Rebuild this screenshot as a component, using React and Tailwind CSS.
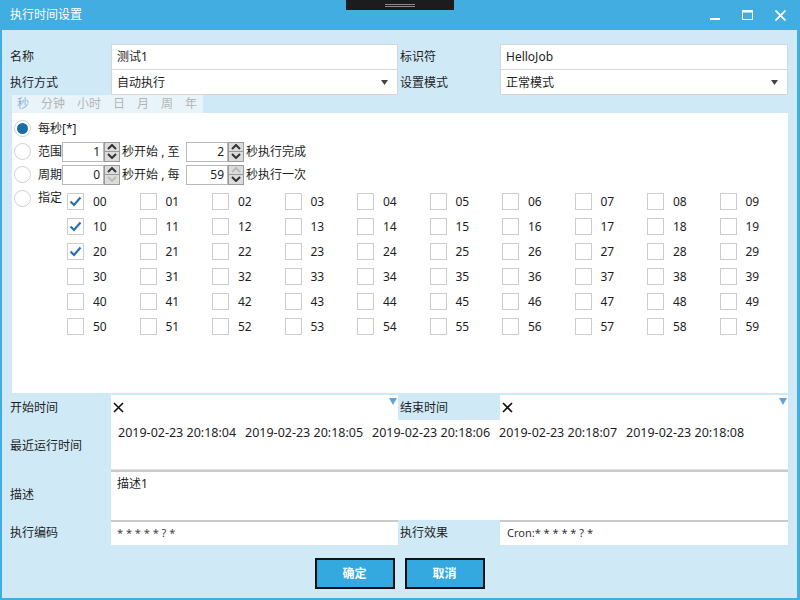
import React from "react";

const dates = [
  "2019-02-23 20:18:04",
  "2019-02-23 20:18:05",
  "2019-02-23 20:18:06",
  "2019-02-23 20:18:07",
  "2019-02-23 20:18:08",
];

const checked = ["00", "10", "20"];

const Caret = () => (
  <svg width="7" height="5" viewBox="0 0 7 5">
    <polygon points="0,0 7,0 3.5,5" fill="#444" />
  </svg>
);

const BlueCaret = () => (
  <svg width="8" height="7" viewBox="0 0 8 7">
    <polygon points="0,0 8,0 4,7" fill="#62a3d6" />
  </svg>
);

const Cross = () => (
  <svg width="11" height="11" viewBox="0 0 11 11">
    <path d="M1 1 L10 10 M10 1 L1 10" stroke="#111" strokeWidth="1.6" />
  </svg>
);

const Radio = ({ on, label }) => (
  <div className="flex items-center">
    <div className="w-[17px] h-[17px] rounded-full border border-[#cfcfcf] bg-white flex items-center justify-center">
      {on && <div className="w-[11px] h-[11px] rounded-full bg-[#1a6da9]" />}
    </div>
    <span className="ml-[7px]">{label}</span>
  </div>
);

const Spin = ({ value, upOff, downOff }) => (
  <div className="flex h-[20px]">
    <div className="w-[42px] border border-[#b9b9b9] bg-white flex items-center justify-end pr-[3px]">{value}</div>
    <div className="w-[16px] flex flex-col border border-[#9a9a9a] bg-[#dcdcdc]">
      <div className="flex-1 flex items-center justify-center border-b border-[#9a9a9a]">
        <svg width="10" height="6" viewBox="0 0 10 6">
          <path d="M1 5 L5 1 L9 5" fill="none" stroke={upOff ? "#bbbbbb" : "#333"} strokeWidth="2" />
        </svg>
      </div>
      <div className="flex-1 flex items-center justify-center">
        <svg width="10" height="6" viewBox="0 0 10 6">
          <path d="M1 1 L5 5 L9 1" fill="none" stroke={downOff ? "#bbbbbb" : "#333"} strokeWidth="2" />
        </svg>
      </div>
    </div>
  </div>
);

const Check = ({ on }) => (
  <div className="w-[17px] h-[17px] shrink-0 border border-[#cccccc] bg-white flex items-center justify-center">
    {on && (
      <svg width="13" height="11" viewBox="0 0 13 11">
        <path d="M1.5 5.5 L5 9 L11.5 1.5" fill="none" stroke="#2a6fae" strokeWidth="2.2" />
      </svg>
    )}
  </div>
);

export default function App() {
  const nums = Array.from({ length: 60 }, (_, i) => String(i).padStart(2, "0"));

  return (
    <div className="w-[800px] h-[600px] flex flex-col text-[12px] text-[#1e1e1e] font-['Noto_Sans','Noto_Sans_CJK_SC',sans-serif]">
      {/* title bar */}
      <div className="relative h-[30px] shrink-0 bg-[#41ade0] flex items-center pl-[10px] text-white">
        <span>执行时间设置</span>
        <div className="absolute left-[346px] top-0 w-[108px] h-[10px] bg-[#1c1c1c] flex flex-col items-center justify-center gap-[1px]">
          <div className="w-[30px] h-px bg-[#8a8a8a]" />
          <div className="w-[30px] h-px bg-[#8a8a8a]" />
        </div>
        <div className="ml-auto mr-[3px] flex">
          <div className="w-[33px] h-[30px] flex items-center justify-center">
            <svg width="10" height="10" viewBox="0 0 10 10">
              <rect x="0" y="8" width="10" height="2" fill="white" />
            </svg>
          </div>
          <div className="w-[33px] h-[30px] flex items-center justify-center">
            <svg width="11" height="10" viewBox="0 0 11 10">
              <rect x="0.5" y="0.5" width="10" height="9" fill="none" stroke="white" />
              <rect x="0" y="0" width="11" height="2.5" fill="white" />
            </svg>
          </div>
          <div className="w-[33px] h-[30px] flex items-center justify-center">
            <svg width="11" height="11" viewBox="0 0 11 11">
              <path d="M0.5 0.5 L10.5 10.5 M10.5 0.5 L0.5 10.5" stroke="white" strokeWidth="1.8" />
            </svg>
          </div>
        </div>
      </div>

      {/* body */}
      <div className="flex-1 flex flex-col bg-[#cfe9f6] border-l-2 border-r-[3px] border-b-2 border-[#41ade0] pt-[14px]">
        <div className="grid grid-cols-[109px_287px_102px_288px] h-[26px]">
          <div className="pl-[8px] flex items-center">名称</div>
          <div className="bg-white border border-[#d6d6d6] flex items-center pl-[5px]">测试1</div>
          <div className="pl-[2px] flex items-center">标识符</div>
          <div className="bg-white border border-[#d6d6d6] flex items-center pl-[5px]">HelloJob</div>
        </div>
        <div className="grid grid-cols-[109px_287px_102px_288px] h-[25px]">
          <div className="pl-[8px] flex items-center pt-[1px]">执行方式</div>
          <div className="bg-white border-x border-b border-[#d6d6d6] flex items-center justify-between pl-[5px] pr-[9px] pt-[1px]">
            <span>自动执行</span>
            <Caret />
          </div>
          <div className="pl-[2px] flex items-center pt-[1px]">设置模式</div>
          <div className="bg-white border-x border-b border-[#d6d6d6] flex items-center justify-between pl-[5px] pr-[9px] pt-[1px]">
            <span>正常模式</span>
            <Caret />
          </div>
        </div>

        {/* tabs */}
        <div className="ml-[10px] w-[191px] h-[18px] bg-[#e9f4fa] flex items-center gap-[12px] pl-[5px] text-[#b4b4b4]">
          <span className="text-[#8db6d6]">秒</span>
          <span>分钟</span>
          <span>小时</span>
          <span>日</span>
          <span>月</span>
          <span>周</span>
          <span>年</span>
        </div>

        {/* panel */}
        <div className="ml-[10px] w-[776px] h-[280px] bg-white pt-[4px]">
          <div className="h-[23px] pl-[2px] flex items-center">
            <Radio on label="每秒[*]" />
          </div>
          <div className="h-[23px] pl-[2px] flex items-center">
            <Radio label="范围" />
            <Spin value="1" />
            <span className="ml-[2px] w-[64px]">秒开始 , 至</span>
            <Spin value="2" />
            <span className="ml-[2px]">秒执行完成</span>
          </div>
          <div className="h-[23px] pl-[2px] flex items-center">
            <Radio label="周期" />
            <Spin value="0" downOff />
            <span className="ml-[2px] w-[64px]">秒开始 , 每</span>
            <Spin value="59" upOff />
            <span className="ml-[2px]">秒执行一次</span>
          </div>
          <div className="flex items-start">
            <div className="w-[55px] shrink-0 pl-[2px] mt-[2px] h-[20px] flex items-center">
              <Radio label="指定" />
            </div>
            <div className="mt-[3px] grid grid-cols-[repeat(10,72.5px)] auto-rows-[25px]">
              {nums.map((n) => (
                <div key={n} className="flex items-center">
                  <Check on={checked.includes(n)} />
                  <span className="ml-[9px]">{n}</span>
                </div>
              ))}
            </div>
          </div>
        </div>

        {/* start / end time */}
        <div className="mt-[2px] grid grid-cols-[109px_287px_102px_288px] h-[25px]">
          <div className="pl-[8px] flex items-center">开始时间</div>
          <div className="bg-white flex justify-between pl-[2px] pr-[1px]">
            <div className="flex items-center"><Cross /></div>
            <div className="pt-[3px]"><BlueCaret /></div>
          </div>
          <div className="pl-[2px] flex items-center">结束时间</div>
          <div className="bg-white flex justify-between pl-[2px] pr-[1px]">
            <div className="flex items-center"><Cross /></div>
            <div className="pt-[3px]"><BlueCaret /></div>
          </div>
        </div>

        {/* recent run times */}
        <div className="grid grid-cols-[109px_677px] h-[50px]">
          <div className="pl-[8px] flex items-center pt-[2px]">最近运行时间</div>
          <div className="bg-white border-b border-[#e2e2e2] flex items-start pl-[7px] pt-[4px]">
            {dates.map((d) => (
              <span key={d} className="w-[127px] text-[12.5px] whitespace-nowrap">{d}</span>
            ))}
          </div>
        </div>

        {/* description */}
        <div className="grid grid-cols-[109px_677px] h-[50px]">
          <div className="pl-[8px] flex items-center">描述</div>
          <div className="bg-white border-t-2 border-[#c9c9c9] pl-[6px] pt-[3px]">描述1</div>
        </div>

        {/* code row */}
        <div className="grid grid-cols-[109px_287px_102px_288px] h-[25px]">
          <div className="pl-[8px] flex items-center">执行编码</div>
          <div className="bg-white border-t-2 border-[#c9c9c9] flex items-center pl-[6px] text-[11px] text-[#444]">* * * * * ? *</div>
          <div className="pl-[2px] flex items-center">执行效果</div>
          <div className="bg-white border-t-2 border-[#c9c9c9] flex items-center pl-[7px] text-[11px] text-[#333]">Cron:* * * * * ? *</div>
        </div>

        {/* buttons */}
        <div className="mt-[13px] flex justify-center gap-[10px]">
          <button className="w-[80px] h-[31px] bg-[#34a9e0] border-2 border-[#111] text-white font-bold">确定</button>
          <button className="w-[80px] h-[31px] bg-[#34a9e0] border-2 border-[#111] text-white font-bold">取消</button>
        </div>
      </div>
    </div>
  );
}
